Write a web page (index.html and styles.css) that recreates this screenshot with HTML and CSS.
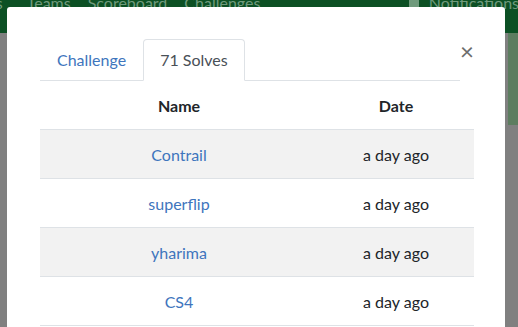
FILE: index.html
```html
<!DOCTYPE html>
<html lang="en">
<head>
    <meta charset="UTF-8">
    <meta name="viewport" content="width=device-width, initial-scale=1.0">
    <title>Challenge Solves</title>
    <link rel="stylesheet" href="styles.css">
</head>
<body>
    <nav class="topbar">
        <span class="nav-link nav-cut">rs</span>
        <span class="nav-link">Teams</span>
        <span class="nav-link">Scoreboard</span>
        <span class="nav-link">Challenges</span>
        <span class="nav-right"><span class="bell"></span>Notifications</span>
    </nav>

    <div class="page">
        <div class="alert-edge"></div>
    </div>

    <div class="modal">
        <div class="modal-head">
            <ul class="tabs">
                <li class="tab">Challenge</li>
                <li class="tab active">71 Solves</li>
            </ul>
            <span class="close">&times;</span>
        </div>

        <table class="solves">
            <thead>
                <tr>
                    <th class="col-name">Name</th>
                    <th class="col-date">Date</th>
                </tr>
            </thead>
            <tbody>
                <tr class="striped">
                    <td><a href="#">Contrail</a></td>
                    <td>a day ago</td>
                </tr>
                <tr>
                    <td><a href="#">superflip</a></td>
                    <td>a day ago</td>
                </tr>
                <tr class="striped">
                    <td><a href="#">yharima</a></td>
                    <td>a day ago</td>
                </tr>
                <tr>
                    <td><a href="#">CS4</a></td>
                    <td>a day ago</td>
                </tr>
            </tbody>
        </table>
    </div>
</body>
</html>
```

FILE: styles.css
```css
body {
    font-family: Lato, "Open Sans", sans-serif;
    background-color: #808080;
    margin: 0;
    padding: 0;
    overflow: hidden;
    height: 327px;
}

.topbar {
    background-color: #0c5024;
    height: 33px;
    display: flex;
    align-items: flex-start;
    font-size: 16px;
    color: #6f9a7c;
    white-space: nowrap;
    overflow: hidden;
}

.nav-link {
    margin-top: -7px;
    margin-right: 17px;
}

.nav-cut {
    margin-left: -10px;
    margin-right: 24px;
}

.nav-right {
    margin-top: -7px;
    margin-left: auto;
    margin-right: -1px;
    display: flex;
    align-items: center;
    gap: 10px;
}

.bell {
    width: 10px;
    height: 13px;
    border-radius: 5px 5px 2px 2px;
    background-color: #6f9a7c;
}

.page {
    display: flex;
    justify-content: flex-end;
}

.alert-edge {
    width: 10px;
    height: 92px;
    background-color: #5d7d60;
}

.modal {
    position: absolute;
    left: 7px;
    top: 7px;
    width: 498px;
    height: 330px;
    background-color: white;
    border-radius: 3px 3px 0 0;
    padding: 32px 33px 0 33px;
    box-sizing: border-box;
}

.modal-head {
    display: flex;
    align-items: flex-start;
}

.tabs {
    list-style: none;
    margin: 0;
    padding: 0;
    display: flex;
    flex: none;
    width: 420px;
    border-bottom: 1px solid #dee2e6;
}

.tab {
    padding: 9px 16px 9px 16px;
    color: #3e75bd;
    font-size: 16px;
    line-height: 22px;
    border: 1px solid transparent;
    border-radius: 4px 4px 0 0;
    margin-bottom: -1px;
}

.tab.active {
    color: #495057;
    background-color: white;
    border-color: #dee2e6 #dee2e6 white;
}

.close {
    flex: 1;
    text-align: right;
    font-size: 24px;
    line-height: 24px;
    color: #6c6c6c;
}

.solves {
    width: 434px;
    border-collapse: collapse;
    font-size: 16px;
    color: #212529;
    text-align: center;
}

.solves th {
    font-weight: bold;
    height: 48px;
    padding: 0;
    border-bottom: 1px solid #dee2e6;
}

.col-name {
    width: 278px;
}

.solves td {
    height: 48px;
    padding: 0;
    border-bottom: 1px solid #dee2e6;
}

.solves tr.striped td {
    background-color: #f2f2f2;
}

.solves a {
    color: #3e75bd;
    text-decoration: none;
}
```
